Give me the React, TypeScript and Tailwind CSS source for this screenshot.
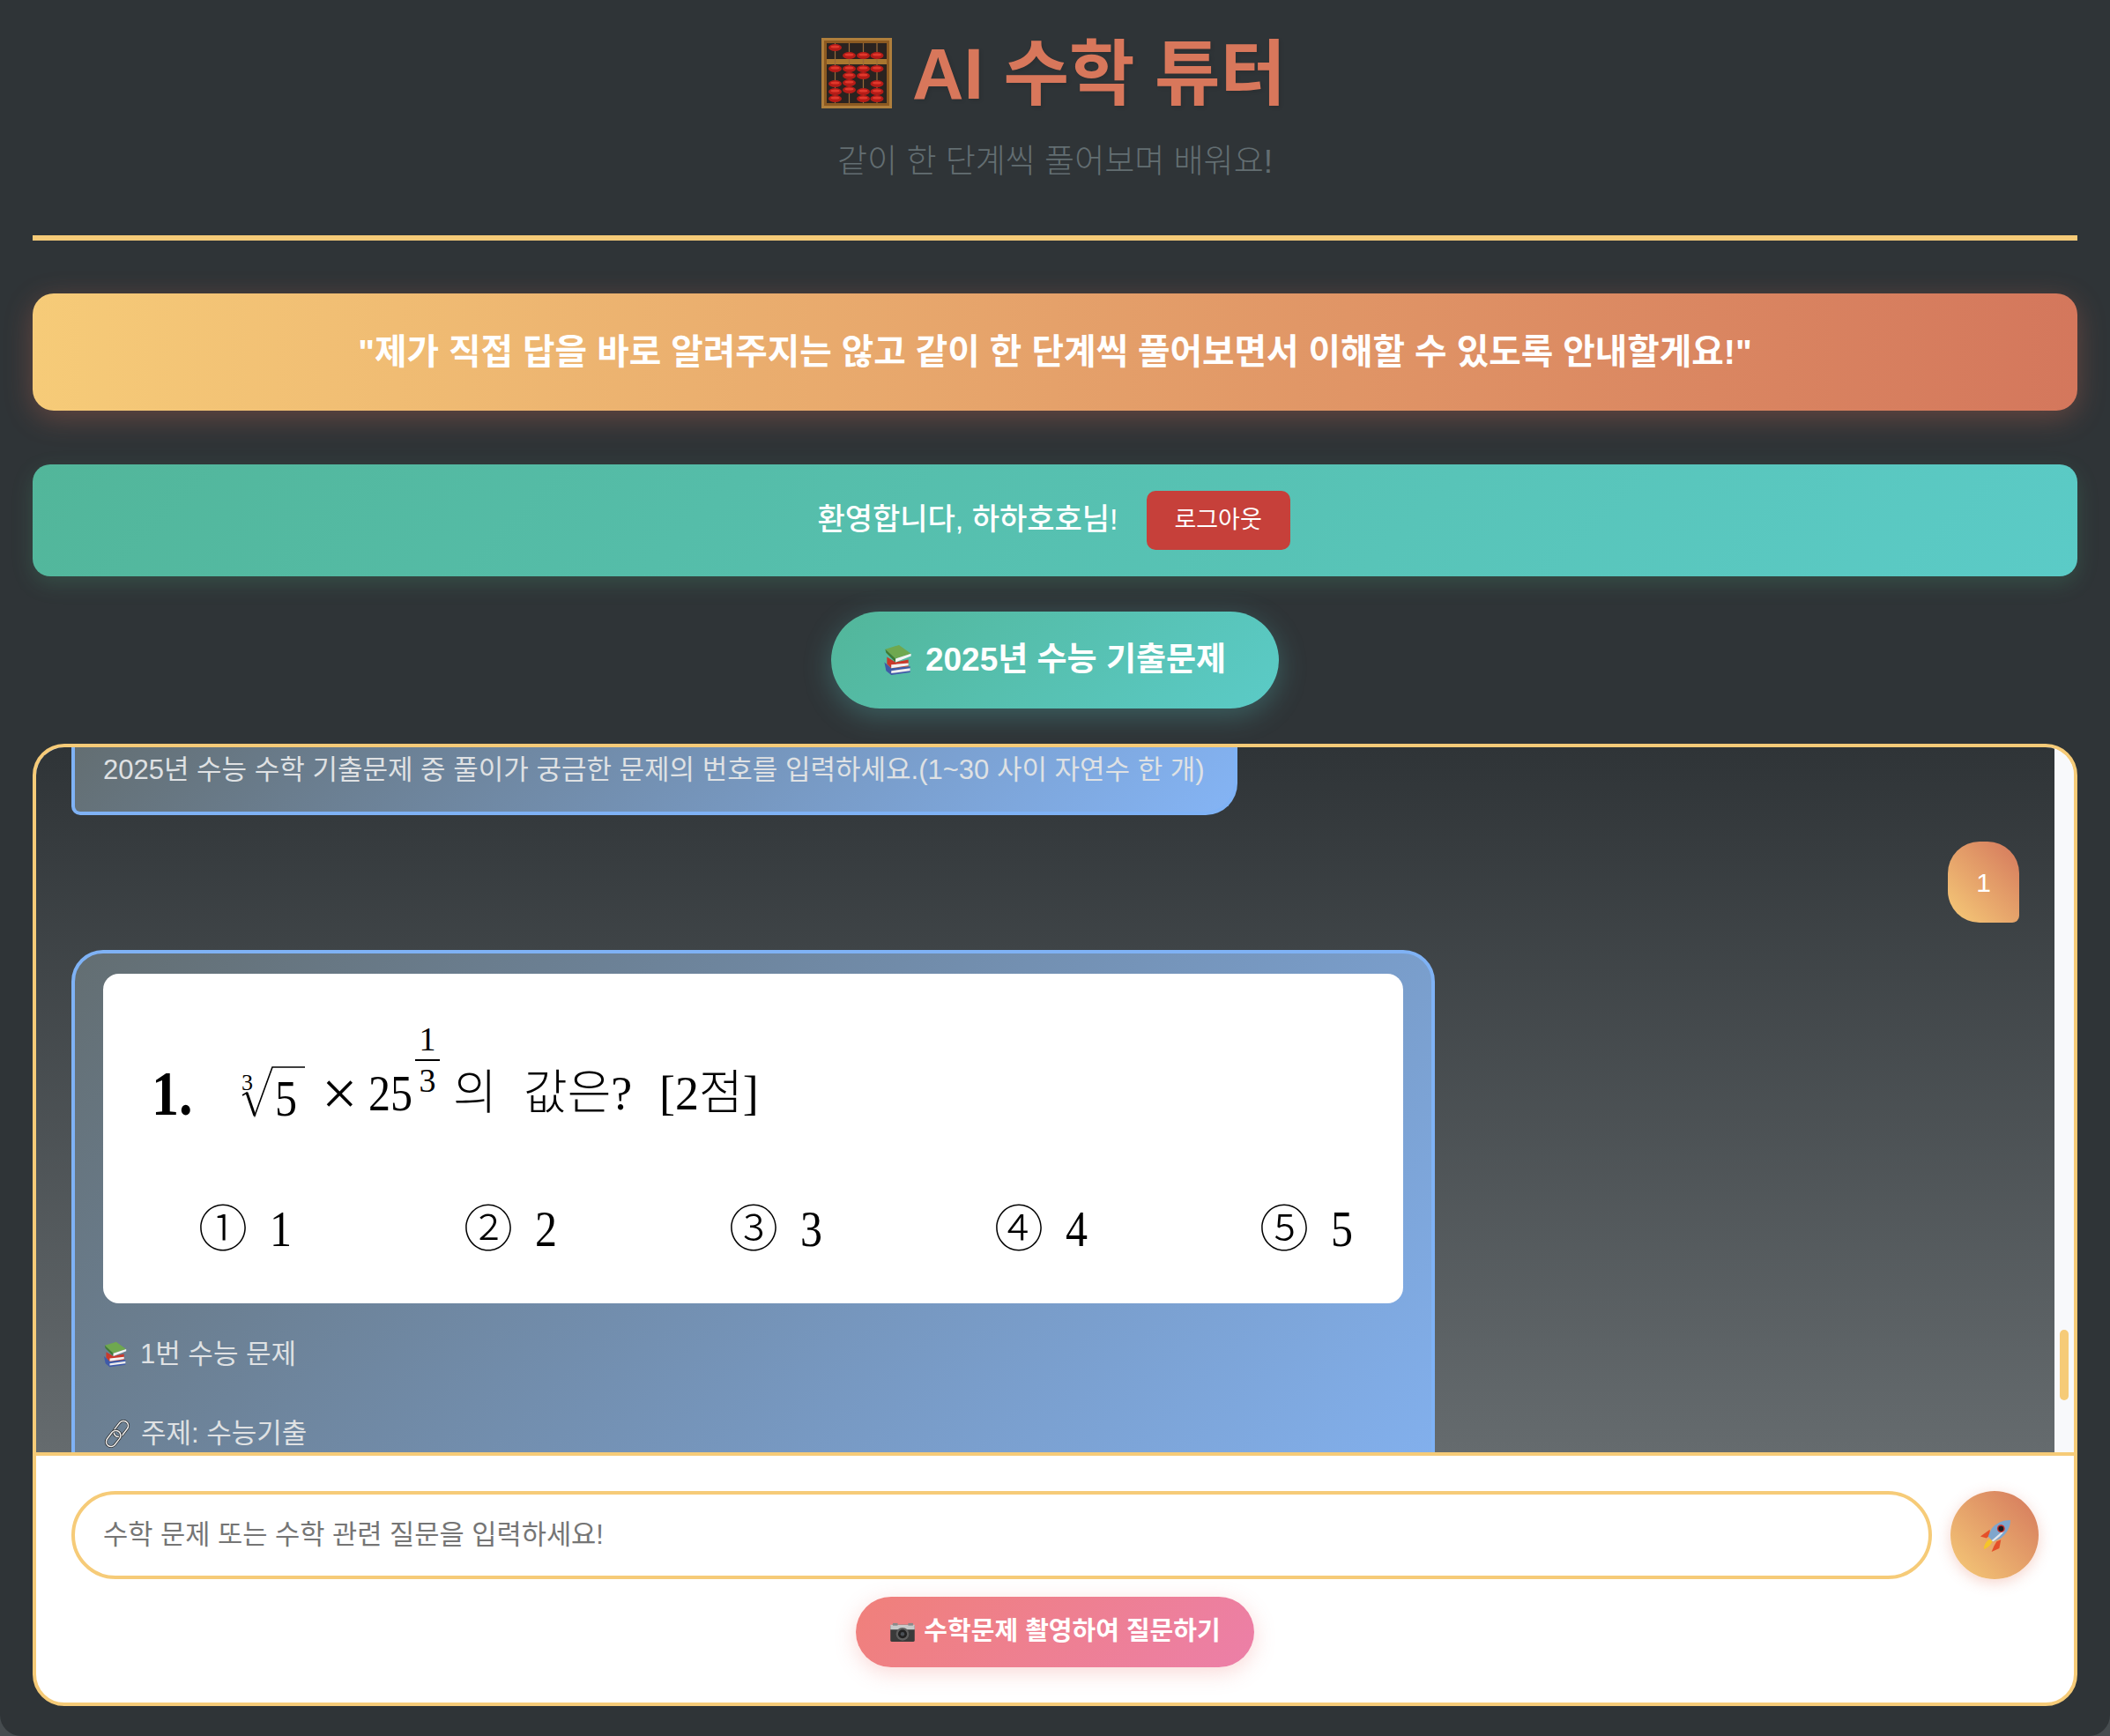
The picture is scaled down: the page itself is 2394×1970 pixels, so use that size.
import type { ReactNode } from "react";

const KO = "font-['Liberation_Sans','Noto_Sans_CJK_KR',sans-serif]";
const MATH = "font-['Liberation_Serif','Noto_Sans_CJK_KR',serif] text-black";

// 이모지 폰트가 없어서 SVG로 직접 그림
function Abacus() {
  const beads: [number, number][] = [
    [15.5, 11], [31.5, 20], [47.5, 20], [63, 20],
    [15.5, 35], [15.5, 52], [15.5, 61], [15.5, 69],
    [31.5, 35], [31.5, 43], [31.5, 51], [31.5, 59],
    [47.5, 35], [47.5, 43], [47.5, 61], [47.5, 69],
    [63, 35], [63, 52], [63, 61], [63, 69],
  ];
  return (
    <svg viewBox="0 0 80 80" className="h-[80px] w-[80px] shrink-0">
      <rect x="0" y="0" width="80" height="80" fill="#8c5a22" />
      <rect x="1.5" y="1.5" width="77" height="77" fill="none" stroke="#b07f3c" strokeWidth="3" />
      <rect x="6" y="6" width="68" height="68" fill="#2a2320" />
      <rect x="6" y="24" width="68" height="6" fill="#a9772f" />
      {[15.5, 31.5, 47.5, 63].map((x) => (
        <rect key={x} x={x - 0.6} y="6" width="1.2" height="68" fill="#9a6a3a" />
      ))}
      {beads.map(([x, y]) => (
        <g key={`${x}-${y}`}>
          <ellipse cx={x} cy={y} rx="7.5" ry="4" fill="#b51c17" />
          <ellipse cx={x} cy={y - 1} rx="5" ry="1.6" fill="#e2382c" />
        </g>
      ))}
    </svg>
  );
}

function Books({ className }: { className: string }) {
  return (
    <svg viewBox="0 0 32 37" className={className}>
      <path d="M0 21l8 7 22-2v7L8 36l-6-5z" fill="#3f5aa8" />
      <path d="M8 31l22-3v3L8 34z" fill="#eeeeee" />
      <path d="M3 15l10 6 15-3v8L8 28l-5-5z" fill="#c9392b" />
      <path d="M8 24l20-2v3L8 28z" fill="#f2f2f2" />
      <path d="M1 6l16-5 14 10-18 6z" fill="#6fa84f" />
      <path d="M1 6l12 11v4L2 10z" fill="#3f7a32" />
      <path d="M13 17l18-6v3l-18 7z" fill="#f4f4f4" />
    </svg>
  );
}

function Chain({ className }: { className: string }) {
  return (
    <svg viewBox="0 0 32 32" className={className} fill="none">
      <g transform="rotate(38 16 16)">
        <rect x="10.5" y="-1" width="11" height="20" rx="5.5" stroke="#2b2b2b" strokeWidth="3" />
        <rect x="10.5" y="-1" width="11" height="20" rx="5.5" stroke="#f0f0f0" strokeWidth="1.5" />
        <rect x="10.5" y="13" width="11" height="20" rx="5.5" stroke="#2b2b2b" strokeWidth="3" />
        <rect x="10.5" y="13" width="11" height="20" rx="5.5" stroke="#f0f0f0" strokeWidth="1.5" />
      </g>
    </svg>
  );
}

function Rocket() {
  return (
    <svg viewBox="0 0 38 38" className="h-[37px] w-[37px]">
      <path d="M13 12L2 20l7 2 4-3z" fill="#e5502a" />
      <path d="M26 24l-2 10-9 4 3-7 3-5z" fill="#e5502a" />
      <path d="M6 35c0-5 3-10 7-12l3 3c-2 4-6 8-10 9z" fill="#f6c52a" />
      <path d="M37 1c-9 0-16 3-22 10l-4 9 6 6 9-4C33 16 37 9 37 1z" fill="#7fa6cc" />
      <path d="M15 25l15-13c-1 4-5 8-13 14z" fill="#e4e8ec" />
      <circle cx="26" cy="11" r="4.5" fill="#c9302a" />
      <circle cx="26" cy="11" r="3" fill="#1b1b22" />
    </svg>
  );
}

function Camera() {
  return (
    <svg viewBox="0 0 30 24" className="h-[22px] w-[30px] shrink-0">
      <rect x="0" y="3" width="30" height="21" rx="2" fill="#3a3a3a" />
      <rect x="0" y="3" width="30" height="6" fill="#c9c9c9" />
      <rect x="3" y="1" width="6" height="3" fill="#8a8a8a" />
      <rect x="22" y="1" width="6" height="3" fill="#8a8a8a" />
      <circle cx="15" cy="14.5" r="8" fill="#5f5f5f" />
      <circle cx="15" cy="14.5" r="5.5" fill="#222" />
      <circle cx="15" cy="14.5" r="2.5" fill="#4a4f55" />
    </svg>
  );
}

function Radical() {
  return (
    <svg viewBox="0 0 72 58" className="h-[58px] w-[72px]" fill="none" stroke="#000">
      <path d="M1 33l5-3 9 26L35 1h37" strokeWidth="1.6" />
      <path d="M6 30l9 26" strokeWidth="3" />
    </svg>
  );
}

function Choice({ mark, value }: { mark: string; value: string }) {
  return (
    <div className="flex items-center">
      <span className="w-[81px] text-[56px] leading-none font-light">{mark}</span>
      <span className="w-[26px] scale-y-[1.12] text-[50px] leading-none">{value}</span>
    </div>
  );
}

function BotBubble({ children, className }: { children: ReactNode; className: string }) {
  return (
    <div
      className={`border-4 border-[#7fb2f5] bg-[linear-gradient(135deg,#636e72,#84b4f5)] text-[#dfe1e3] ${className}`}
    >
      {children}
    </div>
  );
}

export default function App() {
  return (
    <div className={`h-[1970px] bg-[#464c4f] ${KO}`}>
      <div className="flex h-full flex-col rounded-b-[24px] bg-[#2f3437] px-[37px]">
        {/* 헤더 */}
        <header className="flex h-[273px] flex-col items-center border-b-[6px] border-[#f6cb78] pt-[41px]">
          <h1 className="mr-[3px] flex items-center gap-[23px] text-[81px] leading-[80px] font-bold text-[#d8775b] [text-shadow:2px_2px_4px_rgba(0,0,0,0.1)]">
            <Abacus />
            <span className="mt-[3px]">AI 수학 튜터</span>
          </h1>
          <p className="mt-[35px] text-[37px] leading-[50px] font-light text-[#636e72]">
            같이 한 단계씩 풀어보며 배워요!
          </p>
        </header>

        <div className="mt-[60px] flex h-[133px] items-center justify-center rounded-[24px] bg-[linear-gradient(90deg,#f6cb78,#d4775c)] text-[39.7px] font-bold text-white shadow-[0_8px_32px_rgba(225,112,85,0.3)]">
          "제가 직접 답을 바로 알려주지는 않고 같이 한 단계씩 풀어보면서 이해할 수 있도록 안내할게요!"
        </div>

        <div className="mt-[61px] flex h-[127px] items-center justify-center gap-[32px] rounded-[20px] bg-[linear-gradient(135deg,#52b69a,#5bcbc7)] pr-[3px] text-white shadow-[0_8px_24px_rgba(82,183,136,0.2)]">
          <span className="mb-[3px] text-[34px] font-medium">환영합니다, 하하호호님!</span>
          <button className="h-[67px] w-[163px] rounded-[10px] bg-[#c6403a] text-[27px] text-white">로그아웃</button>
        </div>

        <button className="mt-[40px] flex h-[110px] w-[508px] items-center justify-center gap-[15px] self-center rounded-[55px] bg-[linear-gradient(135deg,#52b69a,#5bcbc7)] text-[37px] font-bold text-white shadow-[0_8px_32px_rgba(91,203,199,0.3)]">
          <Books className="h-[36px] w-[32px] shrink-0" />
          2025년 수능 기출문제
        </button>

        {/* 채팅 */}
        <section className="mt-[40px] flex h-[1092px] flex-col overflow-hidden rounded-[36px] border-4 border-[#f6cb78] bg-white">
          <div className="flex h-[804px] shrink-0 border-b-4 border-[#f6cb78]">
            <div className="min-w-0 flex-1 overflow-hidden bg-[linear-gradient(180deg,#2f3437,#656b6e)] px-[40px]">
              <BotBubble className="h-[77px] w-[1323px] rounded-br-[36px] rounded-bl-[10px] border-t-0 pt-[2px] pl-[32px] text-[31px] leading-[48px] whitespace-nowrap">
                2025년 수능 수학 기출문제 중 풀이가 궁금한 문제의 번호를 입력하세요.(1~30 사이 자연수 한 개)
              </BotBubble>

              <div className="mt-[30px] flex justify-end">
                <div className="flex h-[92px] w-[81px] items-center justify-center rounded-[36px] rounded-br-[8px] bg-[linear-gradient(45deg,#f6cb78,#d4775c)] text-[30px] text-white">
                  1
                </div>
              </div>

              <BotBubble className="mt-[31px] h-[720px] w-[1547px] rounded-[36px] px-[32px] pt-[23px]">
                <div className={`flex h-[374px] flex-col rounded-[18px] bg-white ${MATH}`}>
                  <div className="flex h-[271px] items-center pl-[55px]">
                    <span className="w-[102px] scale-y-[1.15] text-[62px] leading-none font-bold">1.</span>
                    <span className="relative mt-[-4px] flex w-[91px]">
                      <Radical />
                      <span className="absolute top-[6px] left-0 text-[26px] leading-none">3</span>
                      <span className="absolute top-[12px] left-[38px] scale-y-[1.12] text-[50px] leading-none">5</span>
                    </span>
                    <span className="w-[53px] text-[72px] leading-none">×</span>
                    <span className="w-[47px] scale-y-[1.12] text-[50px] leading-none whitespace-nowrap">25</span>
                    <span className="flex w-[40px] flex-col items-center self-start pt-[57px]">
                      <span className="text-[38px] leading-[34px]">1</span>
                      <span className="mt-[6px] h-[2px] w-[28px] bg-black" />
                      <span className="mt-[5px] text-[38px] leading-[34px]">3</span>
                    </span>
                    <span className="ml-[9px] w-[80px] text-[54px] leading-none font-light">의</span>
                    <span className="w-[154px] text-[54px] leading-none font-light whitespace-nowrap">값은?</span>
                    <span className="text-[54px] leading-none font-light whitespace-nowrap">[2점]</span>
                  </div>
                  <div className="mt-[-9px] flex justify-between pr-[56px] pl-[108px]">
                    <Choice mark="①" value="1" />
                    <Choice mark="②" value="2" />
                    <Choice mark="③" value="3" />
                    <Choice mark="④" value="4" />
                    <Choice mark="⑤" value="5" />
                  </div>
                </div>
                <div className="mt-[38px] flex items-center gap-[14px] text-[31px] leading-[40px]">
                  <Books className="h-[30px] w-[28px]" />
                  1번 수능 문제
                </div>
                <div className="mt-[50px] flex items-center gap-[11px] text-[31px] leading-[40px]">
                  <Chain className="h-[32px] w-[32px]" />
                  주제: 수능기출
                </div>
              </BotBubble>
            </div>
            {/* 스크롤바 */}
            <div className="w-[22px] shrink-0 bg-[#f8f9fb] px-[6px] pt-[661px]">
              <div className="h-[80px] rounded-[6px] bg-[#f6cb78]" />
            </div>
          </div>

          <div className="flex flex-col items-center px-[40px] pt-[40px]">
            <div className="flex w-full items-center gap-[21px]">
              <input
                placeholder="수학 문제 또는 수학 관련 질문을 입력하세요!"
                className="h-[100px] flex-1 rounded-[50px] border-4 border-[#f6cb78] bg-white pl-[32px] text-[30.7px] outline-none placeholder:text-[#757575]"
              />
              <button className="flex h-[100px] w-[100px] shrink-0 items-center justify-center rounded-full bg-[linear-gradient(45deg,#f6cb78,#d4775c)] shadow-[0_4px_16px_rgba(225,112,85,0.3)]">
                <Rocket />
              </button>
            </div>
            <button className="mt-[20px] flex h-[80px] w-[452px] items-center justify-center gap-[9px] rounded-[40px] bg-[linear-gradient(135deg,#f0807a,#ec7fa8)] text-[29px] font-bold text-white shadow-[0_6px_24px_rgba(240,128,122,0.3)]">
              <Camera />
              수학문제 촬영하여 질문하기
            </button>
          </div>
        </section>
      </div>
    </div>
  );
}
